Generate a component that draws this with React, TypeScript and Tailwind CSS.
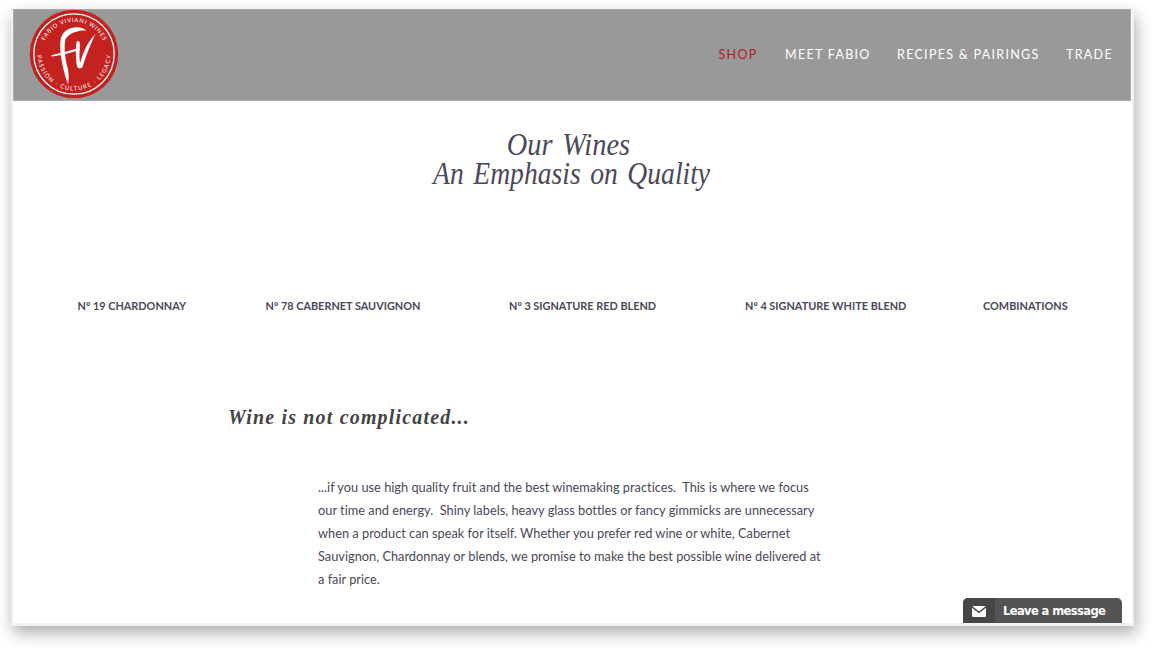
const nav = [
  { label: "SHOP", cls: "w-[66.5px] text-[#b3202a]" },
  { label: "MEET FABIO", cls: "w-[112px] text-white" },
  { label: "RECIPES & PAIRINGS", cls: "w-[169px] text-white" },
  { label: "TRADE", cls: "w-[64px] text-white" },
];

const wines = [
  { label: "Nº 19 CHARDONNAY", cls: "w-[188px]" },
  { label: "Nº 78 CABERNET SAUVIGNON", cls: "w-[243.5px]" },
  { label: "Nº 3 SIGNATURE RED BLEND", cls: "w-[236px]" },
  { label: "Nº 4 SIGNATURE WHITE BLEND", cls: "w-[238px]" },
  { label: "COMBINATIONS", cls: "w-[100px]" },
];

const lines = [
  "...if you use high quality fruit and the best winemaking practices.\u00a0 This is where we focus",
  "our time and energy.\u00a0 Shiny labels, heavy glass bottles or fancy gimmicks are unnecessary",
  "when a product can speak for itself. Whether you prefer red wine or white, Cabernet",
  "Sauvignon, Chardonnay or blends, we promise to make the best possible wine delivered at",
  "a fair price.",
];

function Logo() {
  return (
    <svg viewBox="0 0 90 90" className="-mt-0.5 block h-[90px] w-[90px] shrink-0" aria-label="Fabio Viviani Wines">
      <defs>
        <path id="arc-top" d="M13 45 A32 32 0 0 1 77 45" />
        <path id="arc-bottom" d="M8.8 38 A36.8 36.8 0 1 0 81.2 38" />
      </defs>
      <circle cx="45" cy="45" r="44.3" fill="#c4221f" />
      <circle cx="45" cy="45" r="40.2" fill="none" stroke="#fff" strokeWidth="1.3" />
      <g fill="#fff" fontFamily="Lato, sans-serif" fontSize="5.8">
        <text textAnchor="middle" textLength="73" lengthAdjust="spacing">
          <textPath href="#arc-top" startOffset="50%">FABIO VIVIANI WINES</textPath>
        </text>
        <text textAnchor="middle" textLength="112" lengthAdjust="spacing">
          <textPath href="#arc-bottom" startOffset="50%">PASSION · CULTURE · LEGACY</textPath>
        </text>
      </g>
      <g fill="#fff">
        <path d="M32 29 C34.5 19 49 15 57.5 21.5 C50 21 40.5 23.5 36.5 30 C34.5 37 36.5 53 39 60 C40 66 39.7 72 39 75.5 C36.5 68 34.6 62 34 58 C31.7 48 30.2 36 32 29 Z" />
        <path d="M22.5 46.3 C31 44.2 42 41.5 50.5 38.8 L50.7 40.9 C42 43.7 32 46.5 22.5 47.5 Z" />
        <path d="M47.5 33 C49.5 31 51 32.5 50.9 36 C50.4 43 50.2 50 51.2 54 C53.5 45 58.5 32.5 66.5 25 C62 34 56.8 47 53.7 57.5 C51.3 61 48.3 59.5 47.8 56 C46.6 49 46.8 39 47.5 33 Z" />
      </g>
    </svg>
  );
}

export default function App() {
  return (
    <div className="h-[648px] w-[1152px] overflow-hidden bg-white pt-[9px] pl-[11px] font-['Lato',sans-serif]">
      <div className="flex h-[617px] w-[1123px] flex-col border-x-2 border-b-[3px] border-[#f1f1f1] bg-white shadow-[2px_7px_15px_rgba(0,0,0,0.33)]">
        <header className="flex h-[92px] w-[1118px] shrink-0 items-center justify-between border border-[#aaaaaa] bg-[#999999] pl-[15px]">
          <Logo />
          <nav className="flex text-[12.5px] leading-5 tracking-[1.3px]">
            {nav.map((n) => (
              <a key={n.label} className={`block whitespace-nowrap ${n.cls}`}>{n.label}</a>
            ))}
          </nav>
        </header>

        <main className="relative flex grow flex-col">
          <h1 className="mt-[29px] mr-[2px] flex flex-col items-center font-['Liberation_Serif',serif] text-[31px] leading-[29px] text-[#4b4859] italic [word-spacing:3px]">
            <span className="mr-[6px] block scale-x-[0.915] whitespace-nowrap">Our Wines</span>
            <span className="block scale-x-[0.89] whitespace-nowrap">An Emphasis on Quality</span>
          </h1>

          <div className="mt-[108px] flex pl-[64.5px] text-[10.9px] leading-5 font-bold text-[#4b4859]">
            {wines.map((w) => (
              <a key={w.label} className={`block shrink-0 whitespace-nowrap ${w.cls}`}>{w.label}</a>
            ))}
          </div>

          <h2 className="mt-[86px] ml-[215px] origin-left scale-x-[0.908] font-['Liberation_Serif',serif] text-[22px] leading-[30px] font-bold tracking-[1.3px] text-[#444444] italic">
            Wine is not complicated...
          </h2>

          <p className="mt-[44px] pl-[305px] text-[12.8px] leading-[23px] text-[#4b4859] [font-variant-ligatures:none]">
            {lines.map((l) => (
              <span key={l} className="block whitespace-nowrap">{l}</span>
            ))}
          </p>

          <button className="absolute right-[10px] bottom-0 flex h-[25px] w-[159px] overflow-hidden rounded-t-[5px] bg-[#545454] text-white">
            <span className="flex h-full w-8 items-center justify-center bg-[#464646]">
              <svg viewBox="0 0 14 11" className="mt-px h-[11px] w-[14px]">
                <rect width="14" height="11" rx="1.5" fill="#fff" />
                <path d="M0 0.8 L7 6.4 L14 0.8" fill="none" stroke="#464646" strokeWidth="1.5" />
              </svg>
            </span>
            <span className="pl-[8px] font-['DejaVu_Sans',sans-serif] text-[11.5px] leading-[26px] font-bold tracking-[-0.6px] whitespace-nowrap">Leave a message</span>
          </button>
        </main>
      </div>
    </div>
  );
}
